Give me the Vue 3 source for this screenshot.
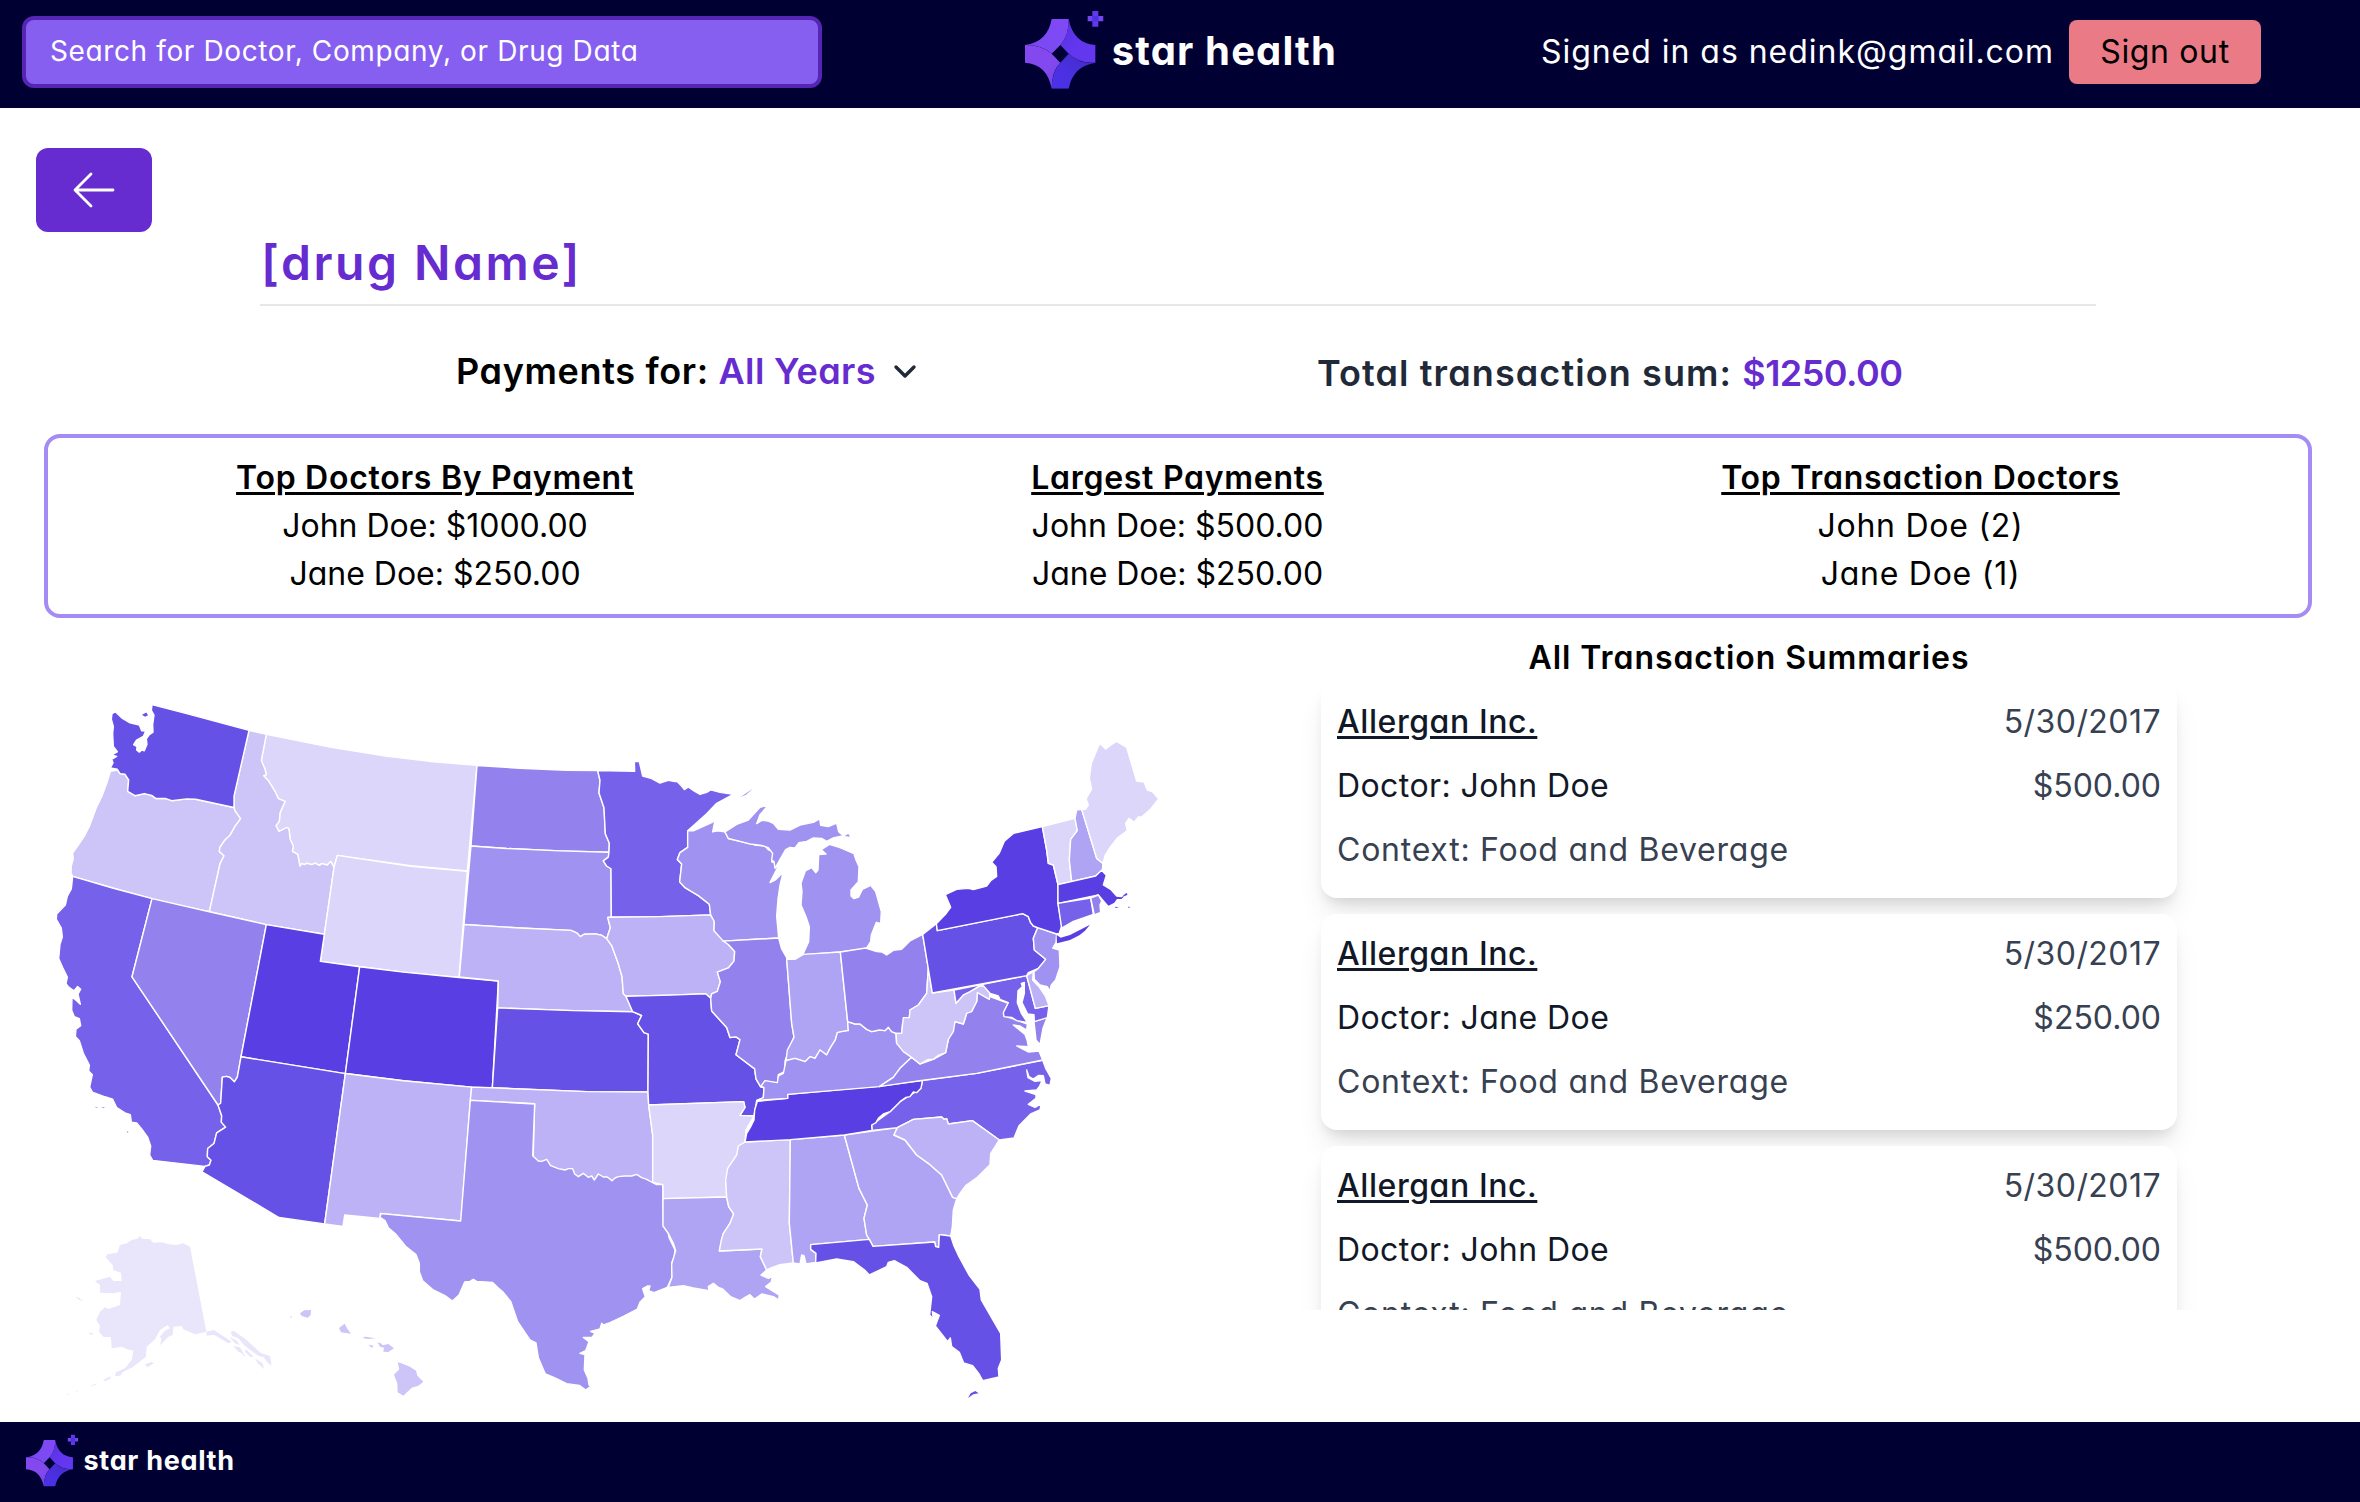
<script setup>
const leaders = [
  { title: 'Top Doctors By Payment', rows: ['John Doe: $1000.00', 'Jane Doe: $250.00'] },
  { title: 'Largest Payments', rows: ['John Doe: $500.00', 'Jane Doe: $250.00'] },
  { title: 'Top Transaction Doctors', rows: ['John Doe (2)', 'Jane Doe (1)'] },
]

const transactions = [
  { id: 1, company: 'Allergan Inc.', date: '5/30/2017', doctor: 'John Doe', amount: '$500.00', context: 'Food and Beverage' },
  { id: 2, company: 'Allergan Inc.', date: '5/30/2017', doctor: 'Jane Doe', amount: '$250.00', context: 'Food and Beverage' },
  { id: 3, company: 'Allergan Inc.', date: '5/30/2017', doctor: 'John Doe', amount: '$500.00', context: 'Food and Beverage' },
]

// Shades of the choropleth, lightest to darkest
const s = ['#e9e5fb', '#dcd6fa', '#cdc4f8', '#bdb2f6', '#afa3f3', '#a092f1', '#9382ee', '#7661ea', '#6651e6', '#593ee3']

// States are grouped by region; each region carries its own drawing scale.
// Small islands are kept apart so that the border stroke does not swallow them.
const regions = [
  {
    transform: 'translate(30 680) scale(.33333 .35714)',
    states: [
      { id: 'MT', fill: s[1], d: 'M709 152L900 188L1066 213L1200 228L1341 239L1312 535L1142 520L922 491L912 525L902 508L892 518L875 514L868 519L855 513L846 517L830 513L824 517L815 514L810 521L803 488L787 480L790 465L780 445L778 425L776 416L770 413L747 424L738 408L748 395L750 372L765 340L745 332L735 312L715 282L701 268L709 265L705 250L694 225Z' },
      { id: 'OR', fill: s[2], d: 'M241 256L262 252L270 262L285 264L296 280L293 312L315 324L343 318L365 323L378 332L408 332L425 338L470 333L497 334L612 357L616 367L632 388L615 410L600 435L585 448L570 468L568 480L582 492L570 515L538 649L450 632L366 612L250 583L128 550L123 540L124 520L130 500L128 485L148 458L163 437L178 410L198 360L216 325L230 290Z' },
      { id: 'ID', fill: s[2], d: 'M657 141L709 152L694 225L705 250L709 265L701 268L715 282L735 312L745 332L765 340L750 372L748 395L738 408L747 424L770 413L776 416L778 425L780 445L790 465L787 480L803 488L810 521L815 514L824 517L830 513L846 517L855 513L868 519L875 514L892 518L902 508L912 525L883 712L709 685L538 649L570 515L582 492L568 480L570 468L585 448L600 435L615 410L632 388L616 367L612 357L612 325Z' },
      { id: 'WA', fill: s[8], d: 'M366 69L470 94L657 141L612 325L612 357L497 334L470 333L425 338L408 332L378 332L365 323L343 318L315 324L293 312L296 280L285 264L270 262L262 250L241 246L249 232L245 222L260 214L245 210L262 201L250 186L248 150L250 130L244 110L246 94L256 89L275 106L300 120L328 126L335 142L347 143L340 158L320 168L311 181L321 187L320 196L328 202L335 196L343 198L351 180L349 165L358 153L369 146L368 125L372 98L364 85Z', islands: 'M336 97L349 91L354 99L345 103Z' },
      { id: 'WY', fill: s[1], d: 'M922 491L1142 522L1312 536L1287 833L1120 818L871 788L883 712L912 525Z' },
      { id: 'CA', fill: s[7], d: 'M128 550L250 583L366 612L306 831L564 1190L575 1220L574 1238L587 1252L560 1268L552 1298L533 1312L532 1335L543 1345L538 1358L525 1362L368 1345L359 1330L362 1305L353 1280L335 1257L320 1240L304 1238L301 1217L285 1212L260 1197L248 1174L225 1167L187 1154L179 1140L187 1105L176 1095L178 1078L160 1045L148 1010L136 998L138 978L152 968L148 948L133 943L125 925L126 888L140 898L151 908L144 880L152 866L143 858L132 870L116 860L108 850L112 832L98 805L86 780L90 740L97 720L94 695L79 670L80 655L106 630L112 605L124 585Z', islands: 'M193 1195L203 1196L200 1198ZM213 1196L224 1197L222 1199ZM290 1263L296 1266L292 1267Z' },
      { id: 'NV', fill: s[6], d: 'M366 612L538 649L709 685L633 1055L622 1112L613 1125L600 1113L590 1110L577 1112L572 1185L564 1190L306 831Z' },
      { id: 'UT', fill: s[9], d: 'M709 685L883 712L871 788L989 803L946 1102L633 1055Z' },
      { id: 'CO', fill: s[9], d: 'M989 803L1120 818L1287 833L1405 843L1387 1142L1325 1140L1120 1122L946 1102Z' },
      { id: 'AZ', fill: s[8], d: 'M633 1055L946 1102L884 1523L747 1505L516 1377L525 1362L538 1358L543 1345L532 1335L533 1312L552 1298L560 1268L587 1252L574 1238L575 1220L564 1190L572 1185L577 1112L590 1110L600 1113L613 1125L622 1112Z' },
      { id: 'NM', fill: s[3], d: 'M946 1102L1120 1122L1325 1140L1321 1177L1293 1515L1051 1494L1050 1508L944 1498L939 1530L884 1523Z' },
    ],
  },
  {
    transform: 'translate(440 720) scale(.33333 .34439)',
    states: [
      { id: 'ND', fill: s[6], d: 'M111 132L240 140L380 146L473 147L480 175L477 212L492 255L496 330L508 358L507 384L360 380L200 373L93 366Z' },
      { id: 'SD', fill: s[5], d: 'M93 366L200 373L360 380L507 384L505 398L490 409L500 424L513 432L514 572L503 573L511 603L500 635L485 625L466 621L432 622L421 629L410 618L393 611L240 604L72 594Z' },
      { id: 'NE', fill: s[3], d: 'M72 594L240 604L393 611L410 618L421 629L432 622L466 621L485 625L500 635L515 655L534 705L546 745L550 795L558 802L578 847L400 844L173 836L175 758L58 746Z' },
      { id: 'KS', fill: s[8], d: 'M173 836L400 844L578 847L605 858L593 882L612 908L625 912L624 1080L440 1079L157 1068Z' },
      { id: 'OK', fill: s[3], d: 'M95 1066L157 1068L440 1079L624 1080L626 1118L638 1205L638 1370L515 1380L278 1330L284 1114L91 1104Z' },
      { id: 'MN', fill: s[7], d: 'M473 147L584 149L583 120L598 121L608 163L635 170L660 183L685 175L705 179L712 179L724 191L733 202L745 194L762 206L780 216L800 210L812 203L840 210L880 216L830 242L800 272L743 322L743 370L720 385L712 405L725 418L719 470L735 487L775 510L808 535L812 566L660 571L514 572L513 432L500 424L490 409L505 398L507 384L508 358L496 330L492 255L477 212L480 175Z' },
      { id: 'IA', fill: s[3], d: 'M503 573L660 571L812 566L823 585L822 612L850 636L865 652L884 672L882 700L865 720L832 732L841 760L832 788L815 795L812 808L797 795L690 799L558 802L550 795L546 745L534 705L515 655L500 635L511 603Z' },
      { id: 'MO', fill: s[8], d: 'M558 802L690 799L797 795L812 808L815 845L860 893L870 922L888 920L900 928L888 972L944 1013L948 1042L962 1065L972 1068L970 1097L950 1105L942 1150L900 1148L915 1125L911 1108L626 1118L624 1080L625 912L612 908L593 882L605 858L578 847Z' },
      { id: 'AR', fill: s[1], d: 'M626 1118L911 1108L915 1125L900 1148L942 1150L918 1190L915 1225L890 1265L865 1310L858 1345L860 1385L669 1390L668 1349L638 1343L638 1205Z' },
      { id: 'WI', fill: s[5], d: 'M743 322L760 322L815 298L825 291L818 325L832 322L855 325L866 345L930 358L945 363L975 366L985 377L996 381L1000 400L995 412L1005 415L1012 430L990 472L1005 465L1029 443L1020 480L1014 520L1010 570L1016 633L850 642L822 612L823 585L812 566L808 535L775 510L735 487L719 470L725 418L712 405L720 385L743 370Z' },
      { id: 'IL', fill: s[6], d: 'M850 642L1016 633L1025 665L1040 690L1055 880L1062 920L1035 990L1035 1020L1015 1030L1013 1055L975 1048L970 1065L962 1065L948 1042L944 1013L888 972L900 928L888 920L870 922L860 893L815 845L812 808L815 795L832 788L841 760L832 732L865 720L882 700L884 672L865 652Z' },
    ],
  },
  {
    transform: 'translate(370 1080) scale(.33333)',
    states: [
      { id: 'TX', fill: s[5], d: 'M301 61L494 72L488 227L505 243L515 244L530 238L542 257L565 266L585 270L595 266L608 266L614 282L625 290L640 280L650 288L655 292L665 288L673 300L685 282L700 291L712 291L726 302L735 294L745 290L765 288L785 288L800 283L815 293L830 298L848 308L860 314L878 314L880 438L895 460L897 472L915 510L913 530L905 548L906 592L892 622L852 638L836 632L840 618L832 618L818 626L826 650L810 667L802 687L760 709L720 728L700 735L695 730L690 747L662 754L675 760L666 772L640 772L657 785L647 812L630 820L645 824L643 870L654 895L657 915L663 919L647 930L628 916L590 911L555 894L526 882L505 833L498 789L480 780L443 725L422 664L400 637L385 624L367 607L320 604L310 598L300 604L284 606L267 645L247 663L225 647L190 630L158 602L148 575L148 550L138 524L108 500L78 463L55 443L45 422L30 412L33 401L272 423Z' },
    ],
  },
  {
    transform: 'translate(560 1040) scale(.33333)',
    states: [
      { id: 'LA', fill: s[4], d: 'M309 476L500 471L506 500L521 522L510 550L490 580L478 633L606 627L601 650L620 690L603 705L625 715L637 710L634 726L617 740L657 765L657 780L640 770L605 762L583 778L570 764L555 772L540 782L513 771L488 747L475 742L460 730L445 740L447 752L400 744L370 737L325 742L336 712L335 672L347 632L340 610L325 580L309 558Z' },
      { id: 'MS', fill: s[2], d: 'M555 306L691 299L688 550L700 669L660 674L637 682L620 690L601 650L606 627L478 633L484 600L490 580L510 550L521 522L506 500L500 471L497 420L503 385L530 345L535 318Z' },
      { id: 'AL', fill: s[4], d: 'M691 299L853 285L897 445L922 495L912 535L920 585L928 598L752 614L752 628L768 640L767 667L738 672L732 647L725 645L720 672L700 669L688 550Z' },
      { id: 'GA', fill: s[4], d: 'M853 285L1012 263L1002 285L1035 300L1070 345L1105 370L1145 405L1178 472L1190 476L1180 510L1177 560L1172 588L1138 584L1136 622L1127 620L1124 606L939 619L928 598L920 585L912 535L922 495L897 445Z' },
      { id: 'FL', fill: s[8], d: 'M752 614L928 598L939 619L1124 606L1127 620L1136 622L1138 584L1172 588L1182 618L1197 650L1227 705L1260 748L1264 780L1322 880L1325 960L1315 985L1317 1011L1268 1022L1256 1000L1238 977L1211 969L1198 937L1175 920L1171 894L1163 905L1126 858L1138 826L1117 815L1120 837L1109 825L1115 770L1101 730L1080 722L1040 682L1003 662L985 667L980 680L928 705L916 692L880 665L830 657L767 669L768 640L752 628Z', islands: 'M1224 1074L1232 1060L1246 1053L1256 1060L1240 1063Z' },
      { id: 'NC', fill: s[7], d: 'M1087 122L1250 100L1448 61L1457 85L1474 115L1470 136L1455 132L1450 107L1436 106L1420 117L1407 110L1400 90L1404 113L1425 124L1446 122L1438 140L1430 150L1395 153L1428 164L1428 175L1405 193L1425 202L1444 191L1440 210L1412 222L1377 257L1362 294L1318 300L1237 242L1165 252L1160 236L1152 238L1145 231L1060 238L1012 263L936 271L935 255L990 215L1020 185L1083 145Z' },
      { id: 'SC', fill: s[3], d: 'M1012 263L1060 238L1145 231L1152 238L1160 236L1165 252L1237 242L1318 300L1292 341L1290 374L1252 412L1217 437L1202 457L1190 476L1178 472L1145 405L1105 370L1070 345L1035 300L1002 285Z' },
      { id: 'TN', fill: s[9], d: 'M592 184L683 175L683 163L960 138L1087 122L1083 145L1070 158L1060 156L1050 170L1038 172L1020 185L990 215L970 222L955 235L948 248L935 255L936 271L853 285L691 299L555 306L560 280L571 262L582 240L584 210Z' },
    ],
  },
  {
    transform: 'translate(700 720) scale(.33333)',
    states: [
      { id: 'MI', fill: s[5], d: 'M75 336L110 313L145 300L180 262L205 256L180 284L170 311L185 301L205 303L220 310L235 328L270 330L300 315L340 307L359 297L362 316L385 320L410 309L416 335L430 347L400 354L380 364L365 355L340 354L320 364L297 368L285 384L270 382L257 389L242 415L225 445L222 425L215 420L218 400L205 383L185 376L150 372L85 355ZM308 705L326 665L328 620L318 590L303 555L306 515L303 490L316 453L335 443L347 458L354 450L356 404L378 402L364 389L388 373L420 383L462 401L468 420L477 440L475 485L453 510L453 528L462 536L476 531L487 508L512 496L527 515L544 575L542 610L529 607L514 645L512 665L499 686L421 696Z', islands: 'M122 231L158 206L138 224ZM434 348L445 342L450 350Z' },
      { id: 'IN', fill: s[4], d: 'M260 717L285 718L310 703L421 696L443 905L445 932L425 935L412 938L406 960L390 985L380 1005L360 990L345 1015L330 1010L315 1025L285 1015L258 1022L262 990L282 952L275 910Z' },
      { id: 'KY', fill: s[5], d: 'M170 1141L263 1135L263 1123L538 1100L580 1072L600 1045L635 1012L590 970L588 940L575 935L565 922L555 932L538 930L515 935L500 928L480 912L465 912L443 905L445 932L425 935L412 938L406 960L390 985L380 1005L360 990L345 1015L330 1010L315 1025L285 1015L258 1022L250 1060L235 1068L232 1088L195 1082L183 1098L192 1103L190 1133Z' },
      { id: 'OH', fill: s[6], d: 'M421 696L497 684L530 695L545 696L560 705L580 691L605 688L630 663L668 643L685 745L680 820L655 855L630 870L628 893L608 910L605 940L588 940L575 935L565 922L555 932L538 930L515 935L500 928L480 912L465 912L443 905Z' },
      { id: 'VA', fill: s[6], d: 'M538 1100L665 1081L830 1060L1028 1020L1017 993L985 996L970 988L950 978L985 980L982 963L975 943L940 915L960 918L980 930L982 912L935 895L912 888L925 850L870 830L832 818L830 845L800 880L790 912L765 905L745 958L737 998L700 1018L660 1032L635 1012L600 1045L580 1072ZM1002 905L1042 892L1029 925L1020 974L1008 960Z' },
      { id: 'WV', fill: s[2], d: 'M685 745L697 819L762 810L768 850L790 825L810 815L835 800L850 797L870 820L868 838L832 818L830 845L815 875L800 880L790 912L765 905L760 935L745 958L737 998L715 1006L700 1018L685 1018L660 1032L635 1012L610 995L590 970L588 940L605 940L608 910L610 893L628 893L630 870L655 855L680 820Z' },
      { id: 'MD', fill: s[7], d: 'M762 810L980 767L1006 865L1047 857L1042 893L1003 905L1002 884L983 882L966 848L973 820L973 787L964 790L967 800L954 812L952 848L964 880L982 907L950 902L935 892L912 890L910 878L925 848L900 838L895 828L870 820L850 797L835 800L810 815L790 825L768 850Z' },
      { id: 'DE', fill: s[3], d: 'M980 767L1000 755L998 780L1017 800L1037 830L1047 857L1006 865Z' },
      { id: 'PA', fill: s[8], d: 'M668 643L709 611L712 632L968 581L985 590L992 608L1000 618L1013 623L1000 655L1003 690L1037 718L1015 745L985 758L980 767L697 819Z' },
      { id: 'NJ', fill: s[5], d: 'M1013 623L1070 642L1068 668L1058 684L1078 690L1080 740L1067 780L1054 795L1049 814L1042 800L1020 795L1003 778L1002 755L1015 745L1037 718L1003 690L1000 655Z' },
      { id: 'NY', fill: s[9], d: 'M709 611L738 581L752 562L736 524L770 508L805 505L820 509L860 498L873 481L890 469L888 440L875 427L898 399L913 364L941 340L1027 320L1040 390L1045 430L1060 435L1074 494L1074 550L1085 618L1078 640L1070 642L1013 623L1000 618L992 608L985 590L968 581L712 632Z', islands: 'M1071 670L1070 645L1082 653L1110 645L1170 614L1155 632L1138 646L1110 660Z' },
      { id: 'VT', fill: s[1], d: 'M1027 320L1125 295L1132 332L1112 358L1108 420L1115 484L1074 494L1060 435L1045 430L1040 390Z' },
      { id: 'NH', fill: s[4], d: 'M1125 295L1130 270L1145 268L1190 415L1209 430L1207 450L1187 468L1115 484L1108 420L1112 358L1132 332Z' },
      { id: 'ME', fill: s[1], d: 'M1145 268L1156 268L1165 255L1158 237L1175 207L1168 175L1174 130L1199 70L1217 87L1235 73L1250 64L1280 82L1310 183L1332 186L1342 210L1357 215L1376 237L1352 267L1324 292L1316 290L1302 307L1287 295L1277 310L1282 332L1252 354L1227 387L1215 407L1209 430L1190 415Z' },
      { id: 'MA', fill: s[9], d: 'M1074 494L1187 468L1205 451L1219 466L1210 495L1232 508L1250 528L1265 530L1284 522L1265 539L1252 539L1244 550L1225 560L1195 525L1074 550Z', islands: 'M1265 531L1282 525L1281 519L1276 521ZM1245 560L1257 562L1247 564ZM1284 560L1291 561L1286 564Z' },
      { id: 'CT', fill: s[7], d: 'M1074 550L1172 534L1180 583L1150 594L1120 604L1085 624Z' },
      { id: 'RI', fill: s[6], d: 'M1172 534L1195 525L1205 543L1200 555L1202 577L1183 585Z' },
    ],
  },
]

// Alaska and Hawaii stand apart and have no shared borders
const insets = [
  { id: 'AK', fill: s[0], d: 'M197 172L202 163L232 158L240 135L260 130L275 120L292 116L300 107L306 116L330 118L340 128L365 127L385 133L410 135L430 130L450 140L499 395L465 403L430 388L425 378L400 380L398 405L385 410L360 436L365 415L358 412L375 392L390 385L383 375L360 390L345 418L320 440L318 470L280 500L250 515L240 527L225 528L228 517L255 505L275 480L280 452L262 448L245 440L215 445L213 412L190 410L177 395L180 378L169 360L180 335L195 322L205 327L240 315L243 275L220 280L180 278L180 255L165 243L210 230L220 243L245 243L243 218L220 210L218 195ZM499 395L522 390L575 425L565 430L522 404L500 407ZM572 395L582 393L620 420L660 457L670 472L655 467L640 457L615 438L595 415L577 408ZM655 457L690 468L695 497L683 488L670 470ZM568 410L590 422L600 435L585 430ZM580 438L600 442L612 462L595 455ZM600 455L618 468L612 468ZM618 448L640 470L632 472L615 455ZM645 475L668 490L672 507L655 492ZM315 493L335 486L342 490L322 502ZM190 540L213 528L210 536L195 544ZM148 559L170 550L165 556ZM145 400L158 398L157 406ZM105 291L118 294L130 306L115 298ZM78 584L90 579L84 584ZM108 573L114 571L110 577Z' },
  { id: 'HI', fill: s[2], d: 'M780 340L793 331L813 330L812 345L803 353L785 348ZM897 384L914 371L922 386L933 401L903 397ZM968 414L975 410L1006 415L985 417ZM985 434L1000 437L996 444ZM1013 427L1022 430L1028 436L1045 432L1062 445L1045 456L1030 455L1032 443L1020 440ZM1073 487L1084 490L1110 500L1128 512L1132 527L1150 545L1135 557L1115 563L1090 587L1073 577L1072 550L1062 524L1078 508ZM750 351L756 349L755 353Z' },
]
</script>

<template>
  <div class="page">
    <svg class="defs" width="0" height="0" aria-hidden="true">
      <defs>
        <linearGradient id="g-top" x1="1" y1="0" x2="0" y2="1"><stop offset="0" stop-color="#8049f7" /><stop offset=".7" stop-color="#7b4af2" /><stop offset="1" stop-color="#6b3fdf" /></linearGradient>
        <linearGradient id="g-right" x1="0" y1="0" x2="1" y2="1"><stop offset="0" stop-color="#5730d8" /><stop offset=".5" stop-color="#6136ee" /><stop offset="1" stop-color="#6338ee" /></linearGradient>
        <linearGradient id="g-bottom" x1="1" y1="0" x2="0" y2="1"><stop offset="0" stop-color="#422bc4" /><stop offset=".6" stop-color="#4a30e0" /><stop offset="1" stop-color="#4c32e8" /></linearGradient>
        <linearGradient id="g-left" x1="0" y1="0" x2="1" y2="1"><stop offset="0" stop-color="#8549ee" /><stop offset=".6" stop-color="#8249ee" /><stop offset="1" stop-color="#6f40d6" /></linearGradient>
        <symbol id="star-mark" viewBox="0 0 236 236">
          <path fill="url(#g-left)" d="M0 105Q48 104 80 131L106 158Q80 184 80 236Q66 162 0 158Z" />
          <path fill="url(#g-bottom)" d="M106 158L131 131Q168 164 211 158Q144 168 131 236H80Q80 186 106 158Z" />
          <path fill="url(#g-right)" d="M131 27Q145 100 211 105V158Q162 162 128 128L106 105Q132 76 131 27Z" />
          <path fill="url(#g-top)" d="M80 27H131Q132 76 106 105L80 131Q50 104 0 105Q68 96 80 27Z" />
          <path fill="#7546ec" d="M188 18H235V34H188Z" />
          <path fill="#6238ec" d="M202 3H220V50H202Z" />
          <path fill="#4b32e4" d="M202 18H220V34H202Z" />
        </symbol>
      </defs>
    </svg>

    <header class="topbar">
      <div class="search">Search for Doctor, Company, or Drug Data</div>
      <div class="brand">
        <svg class="mark"><use href="#star-mark" /></svg>
        <span class="brand-name">star health</span>
      </div>
      <div class="account">
        <span class="who">Signed in as nedink@gmail.com</span>
        <button class="sign-out">Sign out</button>
      </div>
    </header>

    <main>
      <button class="back" aria-label="Back">
        <svg width="48" height="48" viewBox="0 0 48 48" fill="none" stroke="#fff" stroke-width="2.8" stroke-linecap="round" stroke-linejoin="round"><path d="M21 8L5 24L21 40M5.500 24H43" /></svg>
      </button>

      <h1><span>[drug Name]</span></h1>

      <div class="filters">
        <div class="payments">
          <span class="payments-label">Payments for: <b>All Years</b></span>
          <svg width="24" height="16" viewBox="0 0 24 16" fill="none" stroke="#1f2937" stroke-width="3.400" stroke-linecap="round" stroke-linejoin="round"><path d="M3 3L12 12L21 3" /></svg>
        </div>
        <div class="total"><span>Total transaction sum: <b>$1250.00</b></span></div>
      </div>

      <section class="leaders">
        <div v-for="(group, i) in leaders" :key="group.title" class="leader" :class="'leader-' + i">
          <h2>{{ group.title }}</h2>
          <p v-for="row in group.rows" :key="row">{{ row }}</p>
        </div>
      </section>

      <div class="content">
        <svg class="map" viewBox="0 640 1180 782" width="1180" height="782">
          <g v-for="region in regions" :key="region.transform" :transform="region.transform">
            <path v-for="state in region.states" :key="state.id" class="state" :fill="state.fill" :d="state.d" />
            <template v-for="state in region.states" :key="state.id + '-islands'">
              <path v-if="state.islands" :fill="state.fill" :d="state.islands" />
            </template>
          </g>
          <g transform="translate(40 1200) scale(.33333)">
            <path v-for="state in insets" :key="state.id" :fill="state.fill" :d="state.d" />
          </g>
        </svg>

        <section class="summaries">
          <h3>All Transaction Summaries</h3>
          <div class="list">
            <article v-for="t in transactions" :key="t.id" class="card">
              <div class="line"><a>{{ t.company }}</a><span class="muted date">{{ t.date }}</span></div>
              <div class="line"><span class="doctor">Doctor: {{ t.doctor }}</span><span class="muted amount">{{ t.amount }}</span></div>
              <div class="line muted"><span class="context">Context: {{ t.context }}</span></div>
            </article>
          </div>
        </section>
      </div>
    </main>

    <footer>
      <svg class="mark"><use href="#star-mark" /></svg>
      <span class="brand-name">star health</span>
    </footer>
  </div>
</template>

<style>
body { background: #fff; }
</style>

<style scoped>
.page {
  width: 2360px;
  height: 1502px;
  display: flex;
  flex-direction: column;
  overflow: hidden;
  background: #fff;
  color: #000;
  font-family: Inter, "Open Sans", sans-serif;
  font-feature-settings: "cv11";
  font-size: 32px;
  line-height: 48px;
}
.defs { display: block; width: 0; height: 0; flex: none; }
h1, h2, h3, p { margin: 0; }
button { border: 0; padding: 0; font: inherit; font-feature-settings: inherit; }

.topbar {
  flex: none;
  height: 108px;
  background: #003;
  display: grid;
  grid-template-columns: 1025px 500px 1fr;
  color: #fff;
}
.search {
  box-sizing: border-box;
  width: 800px;
  height: 72px;
  margin: 16px 0 0 22px;
  padding: 6px 24px;
  border: 4px solid #5625b3;
  border-radius: 12px;
  background: #865ff0;
  font-size: 28px;
  line-height: 50px;
  letter-spacing: .62px;
}
.brand { display: flex; }
.mark { flex: none; width: 78.700px; height: 78.700px; margin-top: 10px; }
.brand-name { font-weight: 700; white-space: nowrap; }
.brand .brand-name { margin-left: 8px; font-size: 40px; line-height: 102px; letter-spacing: 1.15px; }
.account { display: flex; padding: 20px 99px 0 0; justify-content: flex-end; gap: 15px; line-height: 64px; }
.who { letter-spacing: .97px; }
.sign-out { width: 192px; height: 64px; border-radius: 8px; background: #eb7a87; color: #000; letter-spacing: .65px; }

main { flex: none; height: 1314px; display: flex; flex-direction: column; }
.back {
  flex: none;
  width: 116px;
  height: 84px;
  margin: 40px 0 0 36px;
  border-radius: 12px;
  background: #662cd0;
  display: grid;
  place-items: center;
}
h1 {
  height: 72px;
  margin: 0 264px 0 260px;
  padding-left: 1px;
  border-bottom: 2px solid #e5e7eb;
  color: #662cd0;
  font-size: 48px;
  line-height: 62px;
  font-weight: 600;
  letter-spacing: 2.5px;
}
.filters { display: flex; height: 128px; font-size: 36px; line-height: 56px; font-weight: 600; }
.filters b { font-weight: 600; color: #662cd0; }
.payments { box-sizing: border-box; width: 1317px; padding: 37px 0 0 456px; display: flex; gap: 17px; letter-spacing: .65px; }
.payments b { letter-spacing: .35px; }
.payments svg { margin-top: 21px; }
.total { padding-top: 39px; color: #1f2937; letter-spacing: 1.1px; }
.total b { letter-spacing: -.55px; }
.leaders {
  box-sizing: border-box;
  height: 184px;
  margin: 0 48px 0 44px;
  padding-top: 16px;
  border: 4px solid #a48cf4;
  border-radius: 16px;
  display: grid;
  grid-template-columns: 774px 711px 1fr;
  text-align: center;
}
h2, h3 { font-size: 32px; font-weight: 600; line-height: 48px; }
h2 { letter-spacing: .72px; }
.leader-2 p { letter-spacing: .75px; }
h2, .card a { text-decoration: underline; text-decoration-thickness: 3px; text-underline-offset: 3px; text-decoration-skip-ink: auto; }
.content { display: flex; margin-top: 22px; }
.map { flex: none; display: block; }
.state { stroke: #fff; stroke-width: 1.4px; stroke-linejoin: round; vector-effect: non-scaling-stroke; }
.summaries { width: 920px; margin-left: 109px; }
h3 { margin-top: -6px; text-align: center; letter-spacing: .92px; }
.list { height: 628px; padding: 0 32px; overflow: hidden; }
.card {
  box-sizing: border-box;
  height: 216px;
  padding: 8px 16px 16px;
  margin-bottom: 16px;
  border-radius: 16px;
  background: #fff;
  box-shadow: 0 20px 30px -6px rgba(0, 0, 0, .1), 0 8px 12px -4px rgba(0, 0, 0, .1);
}
.line { display: flex; justify-content: space-between; line-height: 64px; color: #111827; }
.card a { font-weight: 500; letter-spacing: .57px; }
.doctor { letter-spacing: .42px; }
.context { letter-spacing: .75px; }
.date { letter-spacing: .45px; }
.line.muted, .muted { color: #374151; }

footer { flex: none; height: 80px; background: #003; color: #fff; display: flex; }
footer .mark { width: 52.500px; height: 52.500px; margin: 12px 0 0 26px; }
footer .brand-name { margin-left: 5px; font-size: 27px; line-height: 78px; letter-spacing: .7px; }
</style>
